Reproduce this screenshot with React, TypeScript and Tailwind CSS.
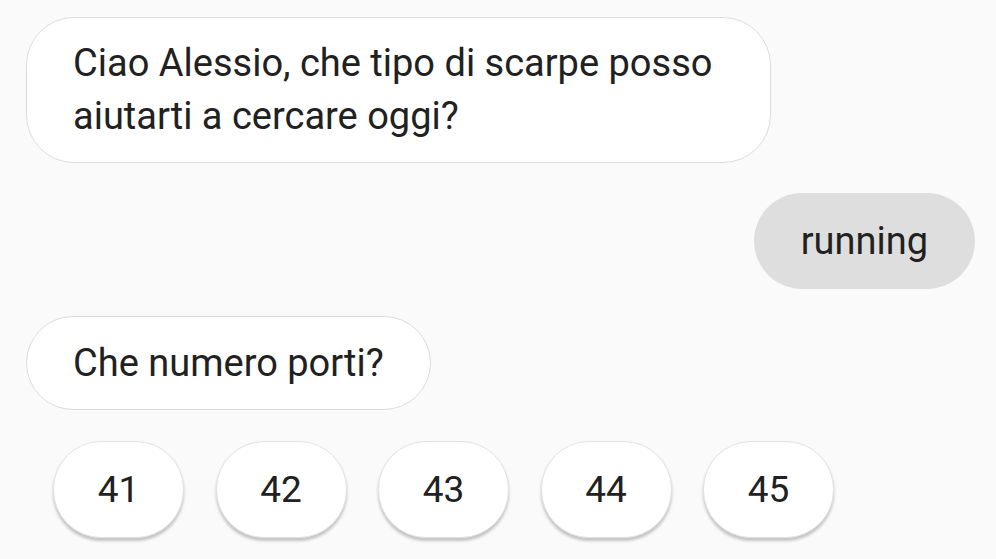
export default function App() {
  const sizes = ["41", "42", "43", "44", "45"]
  return (
    <div
      className="h-[559px] w-[996px] overflow-hidden bg-[#fafafa] text-[#212121]"
      style={{ fontFamily: "Roboto, 'Noto Sans', sans-serif" }}
    >
      <div className="flex flex-col pl-[26px] pr-[21px] pt-[17px]">
        {/* Bot greeting */}
        <div className="w-[745px] rounded-[48px] border border-[#dcdcdc] bg-white px-[46px] py-[19px] text-[38px] leading-[53px]">
          Ciao Alessio, che tipo di scarpe posso aiutarti a cercare oggi?
        </div>

        {/* User reply */}
        <div className="mt-[30px] self-end rounded-full bg-[#dedede] px-[47px] py-[21px] text-[38px] leading-[54px]">
          running
        </div>

        {/* Bot question */}
        <div className="mt-[27px] self-start rounded-full border border-[#dcdcdc] bg-white px-[46px] py-[19px] text-[38px] leading-[54px]">
          Che numero porti?
        </div>

        {/* Quick replies */}
        <div className="mt-[31px] flex gap-[31.5px] pl-[27px]">
          {sizes.map((s) => (
            <button
              key={s}
              className="flex h-[97px] w-[131px] items-center justify-center rounded-[48px] border border-[#e2e2e2] bg-white text-[37px] shadow-[0_3px_3px_rgba(0,0,0,0.22)]"
            >
              {s}
            </button>
          ))}
        </div>
      </div>
    </div>
  )
}
